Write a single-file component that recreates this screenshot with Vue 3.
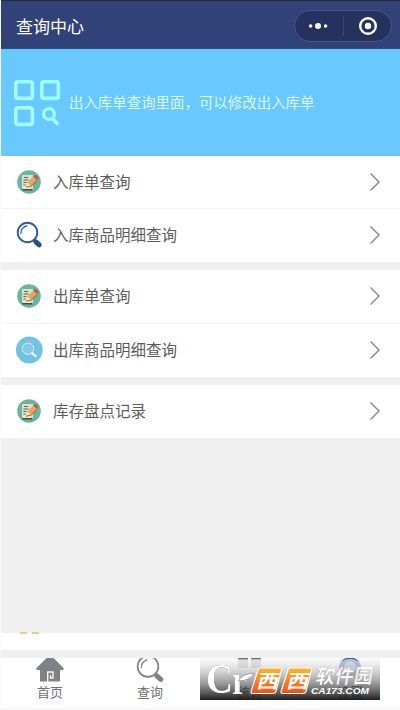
<script setup>
const groups = [
  [
    { label: '入库单查询', icon: 'note' },
    { label: '入库商品明细查询', icon: 'search' },
  ],
  [
    { label: '出库单查询', icon: 'note' },
    { label: '出库商品明细查询', icon: 'disc' },
  ],
  [{ label: '库存盘点记录', icon: 'note' }],
]
</script>

<template>
  <div class="page">
    <header class="navbar">
      <h1>查询中心</h1>
      <div class="capsule">
        <svg class="dots" width="20" height="8" viewBox="0 0 20 8" fill="#fff">
          <circle cx="2.6" cy="4" r="1.8" /><circle cx="10" cy="4" r="3" /><circle cx="17.6" cy="4" r="1.8" />
        </svg>
        <i class="split"></i>
        <svg class="target" width="20" height="20" viewBox="0 0 20 20">
          <circle cx="10" cy="10" r="7.8" fill="none" stroke="#fff" stroke-width="2.4" />
          <circle cx="10" cy="10" r="3.2" fill="#fff" />
        </svg>
      </div>
    </header>

    <section class="banner">
      <svg width="48" height="48" viewBox="0 0 48 48" fill="none" stroke="#a0fdff" stroke-width="3.6">
        <rect x="2.8" y="2.8" width="16.6" height="16.6" rx="2.2" />
        <rect x="28.8" y="2.8" width="16.6" height="16.6" rx="2.2" />
        <rect x="2.8" y="28.8" width="16.6" height="16.6" rx="2.2" />
        <circle cx="36" cy="35" r="5.4" stroke-width="3.4" />
        <path d="M39.8 39.8l4.400 4.800" stroke-linecap="round" />
      </svg>
      <p>出入库单查询里面，可以修改出入库单</p>
    </section>

    <main>
      <section v-for="(group, g) in groups" :key="g" class="group">
        <div v-for="row in group" :key="row.label" class="row">
          <span class="icon">
            <svg v-if="row.icon === 'note'" width="24" height="24" viewBox="0 0 24 24">
              <circle cx="12" cy="12" r="11.8" fill="#6bb5a0" />
              <path d="M5 5h11v14H5z" fill="#dedfcb" />
              <path d="M4.5 18.4h10l1 2.1H6z" fill="#47483f" />
              <path d="M5.3 17.4h9v1.6h-9z" fill="#f3ead4" />
              <path d="M7 7.5h4M6.5 10h5M6.5 12.5h3M6.5 15h2" stroke="#5e665c" stroke-width="1" />
              <path d="M9 17.2l1.2-5 6.5-6 4 3.5-6.6 6.5z" fill="#e8a65c" />
              <path d="M16.2 6.6l1.5-1.3q1-.6 2 .3l1.2 1.2q.9 1 0 2l-1 1.1z" fill="#b36048" />
              <path d="M9 17.2l1.2-5 3.9 4z" fill="#fae4bd" />
              <path d="M9 17.2l5.1-1 6.2-6" stroke="#765039" stroke-width=".8" fill="none" />
            </svg>
            <svg v-else-if="row.icon === 'search'" width="28" height="28" viewBox="0 0 28 28">
              <circle cx="12.5" cy="11.5" r="9.8" fill="#fff" stroke="#315a9b" stroke-width="1.9" />
              <path d="M5.8 12.5q.2-6.3 6.2-7.6" fill="none" stroke="#315a9b" stroke-width="1.3" stroke-linecap="round" />
              <path d="M18.4 18.3l2.5 2.3" stroke="#315a9b" stroke-width="2.4" />
              <path d="M20.8 20.8l3.4 3.1" stroke="#294f91" stroke-width="5" stroke-linecap="round" />
            </svg>
            <svg v-else width="28" height="28" viewBox="0 0 28 28">
              <circle cx="14.3" cy="14" r="13.4" fill="#73c2e4" />
              <circle cx="13" cy="12.7" r="5.7" fill="#84c9e7" stroke="#d5f1fa" stroke-width="1" />
              <path d="M17.2 17.2l3.3 3" stroke="#f0fbfe" stroke-width="2.3" stroke-linecap="round" />
            </svg>
          </span>
          <span class="label">{{ row.label }}</span>
          <svg class="arrow" width="12" height="20" viewBox="0 0 12 20">
            <path d="M1.5 1.5L10 10l-8.5 8.5" fill="none" stroke="#858585" stroke-width="1.4" />
          </svg>
        </div>
      </section>
    </main>

    <div class="strip"><i></i><i></i></div>

    <nav class="tabs">
      <div class="tab">
        <svg width="28" height="24" viewBox="0 0 28 24">
          <path d="M10.5 0h7l10.5 10.5-1 1.5h-3v11.5H4V12H1l-1-1.500z" fill="#808184" />
          <path d="M11.700 24v-10h5.300v6h-2.500v-3" stroke="#f4f4f4" stroke-width="1.400" fill="none" />
        </svg>
        <span>首页</span>
      </div>
      <div class="tab">
        <svg width="28" height="24" viewBox="0 0 28 24">
          <circle cx="12" cy="8.5" r="10.4" fill="none" stroke="#808184" stroke-width="1.7" />
          <path d="M5.3 10q-.5-5.5 5.8-8.3" fill="none" stroke="#808184" stroke-width="1.3" />
          <path d="M18.7 16l2 2" stroke="#808184" stroke-width="2" />
          <path d="M20.9 18l3.9 3.4" stroke="#808184" stroke-width="5" stroke-linecap="round" />
        </svg>
        <span>查询</span>
      </div>
      <div class="tab covered">
        <svg width="28" height="24" viewBox="0 0 28 24"><path d="M2 .8h10M15 .8h10" stroke="#707175" stroke-width="1.6" /><path d="M2 2h10v8H2zM15 2h10v8H15z" fill="#808184" opacity=".2" /></svg>
        <span>统计</span>
      </div>
      <div class="tab covered">
        <svg width="28" height="24" viewBox="0 0 28 24">
          <circle cx="14" cy="10" r="11" fill="#b3bfd6" />
          <path d="M5 3.500Q8 0 11 0h6q3 0 6 3.500Q14-2 5 3.500z" fill="#2d57a0" />
          <circle cx="14" cy="9" r="6" fill="#d5dce8" />
        </svg>
        <span>设置</span>
      </div>
      <svg class="brand" width="180" height="42" viewBox="0 0 180 42">
        <defs>
          <linearGradient id="shade" x2="0" y2="1">
            <stop offset="0" stop-color="#aaa" stop-opacity=".03" />
            <stop offset=".45" stop-color="#777" stop-opacity=".5" />
            <stop offset="1" stop-color="#1a1a1a" stop-opacity=".98" />
          </linearGradient>
          <linearGradient id="orange" x2="0" y2="1">
            <stop offset="0" stop-color="#ffb62c" /><stop offset="1" stop-color="#ee4f16" />
          </linearGradient>
        </defs>
        <rect width="180" height="42" fill="url(#shade)" />
        <g class="monogram">
          <text x="6" y="35" font-size="43" textLength="27" lengthAdjust="spacingAndGlyphs">C</text>
          <text x="32" y="35.5" font-size="43" textLength="15" lengthAdjust="spacingAndGlyphs">r</text>
        </g>
        <path d="M38 23q4-7 16-8-4 8-16 8z" fill="#fff" stroke="#777" stroke-width=".6" />
        <g fill="url(#orange)" stroke="#fff" stroke-width="1.1">
          <path d="M60 10h20q2 0 1.5 2L76 33.5q-.6 2-3 2H52.5q-2 0-1.4-2L58 12q.5-2 2-2z" />
          <path d="M90 10h20q2 0 1.5 2L106 33.5q-.6 2-3 2H82.5q-2 0-1.4-2L88 12q.5-2 2-2z" />
        </g>
        <g class="west">
          <text transform="translate(56 30) skewX(-14)" textLength="22" lengthAdjust="spacingAndGlyphs">西</text>
          <text transform="translate(86 30) skewX(-14)" textLength="22" lengthAdjust="spacingAndGlyphs">西</text>
        </g>
        <text class="cn" transform="translate(115 25) skewX(-10)" textLength="57" lengthAdjust="spacingAndGlyphs">软件园</text>
        <text class="domain" x="111" y="36" textLength="58" lengthAdjust="spacingAndGlyphs">CA173.COM</text>
      </svg>
    </nav>
  </div>
</template>

<style>
body { margin: 0; }
</style>

<style scoped>
.page {
  width: 400px;
  height: 710px;
  overflow: hidden;
  display: flex;
  flex-direction: column;
  background: #f0f0f0;
  color: #5c5c5c;
  font-family: "Noto Sans CJK SC", sans-serif;
  border-left: 1px solid #f9fafa;
  box-sizing: border-box;
}
.navbar {
  box-sizing: border-box;
  height: 49px;
  flex: none;
  display: flex;
  align-items: center;
  justify-content: space-between;
  padding: 2px 8px 0 15px;
  background: #314278;
  border-top: 1px solid #262b3a;
  border-bottom: 1px solid #284e7d;
}
h1 { margin: 0; color: #fff; font-size: 17px; line-height: 24px; font-weight: 400; }
.capsule {
  box-sizing: border-box;
  width: 98px;
  height: 32px;
  display: flex;
  align-items: center;
  justify-content: space-between;
  padding: 0 13px;
  background: #25325f;
  border: 1px solid #485787;
  border-radius: 16px;
}
.split { width: 1px; height: 20px; background: #394774; }
.banner {
  box-sizing: border-box;
  height: 107px;
  flex: none;
  display: flex;
  align-items: center;
  gap: 8px;
  padding-left: 12px;
  background: #68c8ff;
}
.banner p { margin: 0 0 2px; color: #d8faff; font-size: 14.45px; line-height: 22px; white-space: nowrap; }
main { flex: none; display: flex; flex-direction: column; gap: 8px; }
.group { background: #fff; }
.row { height: 53px; display: flex; align-items: center; padding: 0 19px 2px 14px; box-sizing: border-box; }
.row + .row { height: 54px; border-top: 1px solid #f4f4f4; }
.group:first-child .row:first-child { height: 52px; padding-bottom: 0; }
.icon { width: 28px; height: 28px; display: flex; align-items: center; justify-content: center; }
.label { flex: 1; margin: 0 0 2px 10px; font-size: 15.5px; line-height: 24px; white-space: nowrap; }
.strip {
  box-sizing: border-box;
  height: 17px;
  flex: none;
  display: flex;
  gap: 5px;
  padding-left: 19px;
  margin-top: auto;
  background: #fff;
}
.strip i { width: 7px; height: 2px; margin-top: -1px; background: #e8d08c; }
.tabs {
  position: relative;
  height: 49px;
  flex: none;
  display: flex;
  margin: 8px 0 0 -1px;
  background: #fff;
  border-bottom: 3px solid #f8f8fb;
}
.tab { width: 100px; display: flex; flex-direction: column; align-items: center; color: #707175; }
.tab svg { flex: none; }
.tab span { font-size: 13px; line-height: 20px; }
.tab.covered { color: #333; }
.brand { position: absolute; left: 200px; top: 0; }
.monogram { font-family: "Liberation Serif", serif; font-weight: 700; fill: #fff; filter: drop-shadow(0 0 .7px #444); }
.west { font-size: 19px; font-weight: 700; fill: #fff; }
.cn { font-size: 18.5px; font-weight: 700; fill: #fff; filter: drop-shadow(0 0 .7px #333); }
.domain { font: italic 700 9.5px "Liberation Sans", sans-serif; fill: #fff; }
</style>
